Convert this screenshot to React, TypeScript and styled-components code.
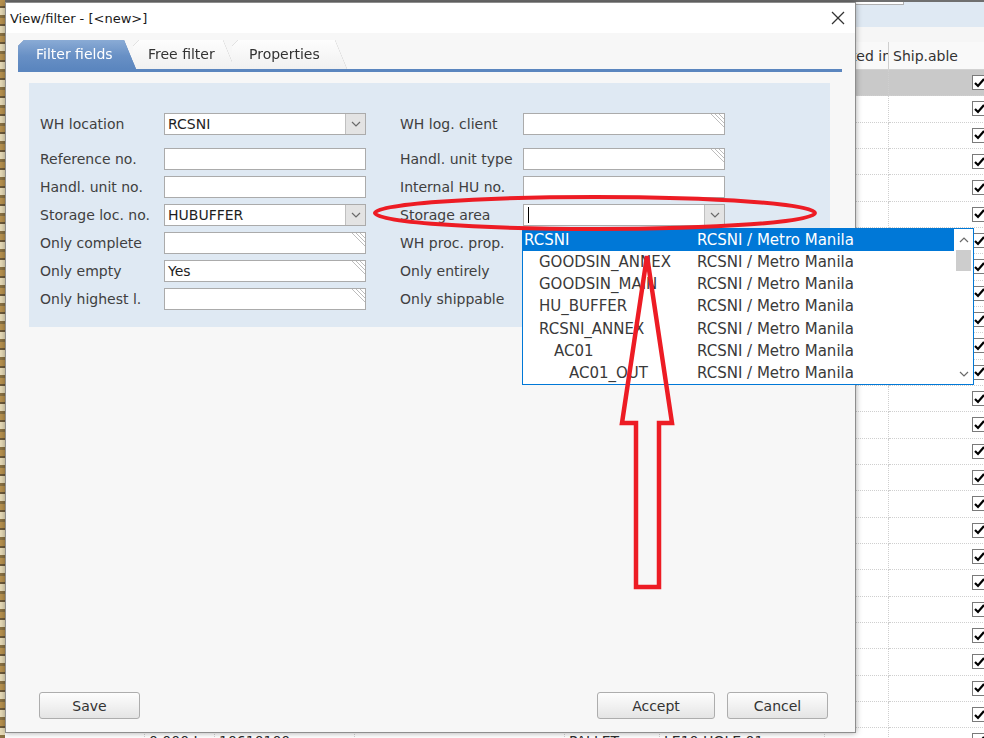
import styled, { createGlobalStyle } from 'styled-components';

const GlobalStyle = createGlobalStyle`
  html, body {
    margin: 0;
    padding: 0;
  }
  body {
    width: 984px;
    height: 738px;
    overflow: hidden;
    background: #ffffff;
    font-family: "DejaVu Sans", Verdana, sans-serif;
  }
  * {
    box-sizing: border-box;
  }
`;

const Screen = styled.div`
  position: relative;
  width: 984px;
  height: 738px;
  overflow: hidden;
  display: flex;
  background: #ffffff;
`;

/* ---------- background application ---------- */

const IconStrip = styled.div`
  width: 5px;
  flex: none;
  background: repeating-linear-gradient(
    180deg,
    #b8924f 0 6px,
    #6d5a3b 6px 8px,
    #e8dcb8 8px 15px,
    #8a7244 15px 18px
  );
`;

const Workspace = styled.div`
  flex: 1;
  min-width: 0;
  display: flex;
  flex-direction: column;
  overflow: hidden;
`;

const FilterBand = styled.div`
  height: 27px;
  flex: none;
  background: #dfe9f3;
  border-top: 2px solid #6f6f6f;
  display: flex;
  justify-content: flex-end;
  align-items: flex-start;
  padding-right: 80px;
`;

const BandInput = styled.div`
  width: 180px;
  height: 3px;
  background: #ffffff;
  border: 1px solid #b0b0b0;
  border-top: none;
`;

const BandGap = styled.div`
  height: 15px;
  flex: none;
  background: #f6f6f6;
`;

const gridCols = '140px 70px 140px 210px 95px 165px 64px 120px';

const HeaderRow = styled.div`
  display: grid;
  grid-template-columns: ${gridCols};
  height: 28px;
  flex: none;
  background: #f9f9f9;
  border-bottom: 1px solid #d2d2d2;
`;

const HeaderCell = styled.div`
  padding-left: 4px;
  display: flex;
  align-items: center;
  font-size: 14px;
  color: #333333;
  white-space: nowrap;
  overflow: hidden;
  border-right: 1px solid #cfcfcf;
`;

const TableRow = styled.div<{ $selected?: boolean }>`
  display: grid;
  grid-template-columns: ${gridCols};
  height: 26.33px;
  flex: none;
  background: ${(p) => (p.$selected ? '#c9c9c9' : '#ffffff')};
`;

const Cell = styled.div<{ $pad?: number }>`
  padding-left: ${(p) => p.$pad ?? 4}px;
  display: flex;
  align-items: center;
  font-size: 14px;
  color: #2b2b2b;
  white-space: nowrap;
  overflow: hidden;
  border-right: 1px dotted #cfcfcf;
  border-bottom: 1px dotted #cfcfcf;
`;

const CheckBox = styled.div`
  width: 15px;
  height: 15px;
  flex: none;
  background: #ffffff;
  border: 1px solid #7a7a7a;
  display: flex;
  align-items: center;
  justify-content: center;
`;

/* ---------- dialog ---------- */

const Dialog = styled.div`
  position: absolute;
  left: 5px;
  top: 2px;
  width: 851px;
  height: 731px;
  border: 1px solid #8e8e8e;
  background: #f7f7f7;
  box-shadow: 0 0 6px rgba(0, 0, 0, 0.35);
  display: flex;
  flex-direction: column;
  z-index: 2;
`;

const TitleBar = styled.div`
  height: 30px;
  flex: none;
  background: #ffffff;
  display: flex;
  align-items: center;
  justify-content: space-between;
  padding: 0 10px 0 4px;
`;

const Title = styled.div`
  font-size: 13px;
  color: #1a1a1a;
`;

const CloseButton = styled.div`
  width: 14px;
  height: 14px;
  display: flex;
`;

const DialogBody = styled.div`
  flex: 1;
  display: flex;
  flex-direction: column;
  padding: 7px 13px 13px 12px;
`;

const TabStrip = styled.div`
  height: 32px;
  flex: none;
  display: flex;
  align-items: flex-end;
  border-bottom: 3px solid #5b86bf;
`;

const TabFrame = styled.div<{ $active?: boolean; $first?: boolean }>`
  position: relative;
  z-index: ${(p) => (p.$active ? 2 : 1)};
  margin-left: ${(p) => (p.$first ? 0 : -3)}px;
  filter: drop-shadow(0 0 0.6px ${(p) => (p.$active ? '#4f79b1' : '#9a9a9a')});
`;

const TabFace = styled.div<{ $active?: boolean; $width: number; $pad: number }>`
  width: ${(p) => p.$width}px;
  height: 29px;
  padding-left: ${(p) => p.$pad}px;
  padding-bottom: 2px;
  display: flex;
  align-items: center;
  font-size: 14px;
  color: ${(p) => (p.$active ? '#ffffff' : '#333333')};
  background: ${(p) =>
    p.$active
      ? 'linear-gradient(180deg, #8aabd5 0%, #6890c5 55%, #5b86bf 100%)'
      : 'linear-gradient(180deg, #fdfdfd 0%, #f1f1f1 100%)'};
  clip-path: polygon(0 6px, 6px 0, calc(100% - 12px) 0, 100% 100%, 0 100%);
`;

const Panel = styled.div`
  height: 244px;
  flex: none;
  margin: 11px 12px 0 11px;
  background: #dfe9f3;
  padding: 30px 0 0 11px;
  display: flex;
  gap: 34px;
`;

const FieldColumn = styled.div`
  display: flex;
  flex-direction: column;
  gap: 6px;
`;

const FieldRow = styled.div<{ $labelWidth: number; $lead?: boolean }>`
  display: grid;
  grid-template-columns: ${(p) => p.$labelWidth}px 202px;
  height: 22px;
  align-items: center;
  margin-bottom: ${(p) => (p.$lead ? 7 : 0)}px;
`;

const Label = styled.div`
  font-size: 14px;
  color: #404040;
  white-space: nowrap;
`;

const InputBox = styled.div`
  height: 22px;
  background: #ffffff;
  border: 1px solid #ababab;
  display: flex;
  align-items: center;
  padding-left: 3px;
  font-size: 14px;
  color: #1e1e1e;
  overflow: hidden;
`;

const InputText = styled.span`
  flex: 1;
  white-space: nowrap;
`;

const DropButton = styled.div`
  width: 20px;
  height: 100%;
  flex: none;
  background: #e3e3e3;
  border-left: 1px solid #c0c0c0;
  display: flex;
  align-items: center;
  justify-content: center;
`;

const Hatch = styled.div`
  width: 14px;
  height: 14px;
  flex: none;
  align-self: flex-start;
  display: flex;
`;

const Caret = styled.span`
  width: 1px;
  height: 16px;
  background: #000000;
  margin-left: 1px;
`;

const ButtonBar = styled.div`
  margin-top: auto;
  display: flex;
  align-items: center;
  gap: 12px;
  padding: 0 14px 0 21px;
`;

const Spacer = styled.div`
  flex: 1;
`;

const PushButton = styled.div<{ $width: number }>`
  width: ${(p) => p.$width}px;
  height: 27px;
  border: 1px solid #adadad;
  border-radius: 3px;
  background: linear-gradient(180deg, #fdfdfd 0%, #f0f0f0 55%, #e4e4e4 100%);
  display: flex;
  align-items: center;
  justify-content: center;
  font-size: 14px;
  color: #333333;
`;

/* ---------- open dropdown list ---------- */

const DropList = styled.div`
  position: absolute;
  left: 522px;
  top: 228px;
  width: 452px;
  height: 157px;
  border: 1px solid #0078d7;
  background: #ffffff;
  display: flex;
  z-index: 5;
`;

const ListBody = styled.div`
  flex: 1;
  display: flex;
  flex-direction: column;
`;

const ListRow = styled.div<{ $selected?: boolean }>`
  display: grid;
  grid-template-columns: 174px 1fr;
  height: 22.3px;
  align-items: center;
  font-size: 15px;
  white-space: nowrap;
  color: ${(p) => (p.$selected ? '#ffffff' : '#3a3a3a')};
  background: ${(p) => (p.$selected ? '#0078d7' : 'transparent')};
`;

const ListName = styled.span<{ $indent: number }>`
  padding-left: ${(p) => 1 + p.$indent * 15}px;
`;

const ScrollBar = styled.div`
  width: 19px;
  flex: none;
  display: flex;
  flex-direction: column;
  background: #ffffff;
`;

const ScrollArrow = styled.div`
  height: 21px;
  flex: none;
  display: flex;
  align-items: center;
  justify-content: center;
`;

const ScrollThumb = styled.div`
  height: 21px;
  flex: none;
  margin: 0 2px;
  background: #cdcdcd;
`;

const Annotation = styled.svg`
  position: absolute;
  left: 0;
  top: 0;
  z-index: 10;
  pointer-events: none;
`;

/* ---------- data ---------- */

const leftFields = [
  { label: 'WH location', value: 'RCSNI', kind: 'combo' },
  { label: 'Reference no.', value: '', kind: 'text' },
  { label: 'Handl. unit no.', value: '', kind: 'text' },
  { label: 'Storage loc. no.', value: 'HUBUFFER', kind: 'combo' },
  { label: 'Only complete', value: '', kind: 'list' },
  { label: 'Only empty', value: 'Yes', kind: 'list' },
  { label: 'Only highest l.', value: '', kind: 'list' },
];

const rightFields = [
  { label: 'WH log. client', value: '', kind: 'list' },
  { label: 'Handl. unit type', value: '', kind: 'list' },
  { label: 'Internal HU no.', value: '', kind: 'text' },
  { label: 'Storage area', value: '', kind: 'caret' },
  { label: 'WH proc. prop.', value: '', kind: 'list' },
  { label: 'Only entirely', value: '', kind: 'list' },
  { label: 'Only shippable', value: '', kind: 'list' },
];

const areas = [
  { name: 'RCSNI', indent: 0 },
  { name: 'GOODSIN_ANNEX', indent: 1 },
  { name: 'GOODSIN_MAIN', indent: 1 },
  { name: 'HU_BUFFER', indent: 1 },
  { name: 'RCSNI_ANNEX', indent: 1 },
  { name: 'AC01', indent: 2 },
  { name: 'AC01_OUT', indent: 3 },
];

const headers = [
  'Storage bin',
  'Quantity',
  'Material',
  'Description',
  'Pack. type',
  'Stor. bin',
  'Picked in stock',
  'Ship.able',
];

const tableRows = Array.from({ length: 26 }, (_, i) => i);

function Chevron({ up }: { up?: boolean }) {
  return (
    <svg width="10" height="6" viewBox="0 0 10 6">
      <polyline
        points={up ? '1,5 5,1 9,5' : '1,1 5,5 9,1'}
        fill="none"
        stroke="#6a6a6a"
        strokeWidth="1.2"
      />
    </svg>
  );
}

function HatchCorner() {
  return (
    <Hatch>
      <svg width="14" height="14" viewBox="0 0 14 14">
        <line x1="1" y1="0" x2="14" y2="13" stroke="#bdbdbd" strokeWidth="1" />
        <line x1="5" y1="0" x2="14" y2="9" stroke="#bdbdbd" strokeWidth="1" />
        <line x1="9" y1="0" x2="14" y2="5" stroke="#bdbdbd" strokeWidth="1" />
      </svg>
    </Hatch>
  );
}

function Field({ label, value, kind, labelWidth, lead }: {
  label: string;
  value: string;
  kind: string;
  labelWidth: number;
  lead?: boolean;
}) {
  return (
    <FieldRow $labelWidth={labelWidth} $lead={lead}>
      <Label>{label}</Label>
      <InputBox>
        {kind === 'caret' && <Caret />}
        <InputText>{value}</InputText>
        {(kind === 'combo' || kind === 'caret') && (
          <DropButton>
            <Chevron />
          </DropButton>
        )}
        {kind === 'list' && <HatchCorner />}
      </InputBox>
    </FieldRow>
  );
}

export default function App() {
  return (
    <>
      <GlobalStyle />
      <Screen>
        <IconStrip />
        <Workspace>
          <FilterBand>
            <BandInput />
          </FilterBand>
          <BandGap />
          <HeaderRow>
            {headers.map((h) => (
              <HeaderCell key={h}>{h}</HeaderCell>
            ))}
          </HeaderRow>
          {tableRows.map((i) => (
            <TableRow key={i} $selected={i === 0}>
              <Cell />
              <Cell>0.000 L</Cell>
              <Cell>10610100</Cell>
              <Cell />
              <Cell>PALLET</Cell>
              <Cell>LE10 HOLE 01</Cell>
              <Cell />
              <Cell $pad={83}>
                <CheckBox>
                  <svg width="11" height="10" viewBox="0 0 11 10">
                    <polyline
                      points="1,5 4,8 10,1"
                      fill="none"
                      stroke="#000"
                      strokeWidth="2.2"
                    />
                  </svg>
                </CheckBox>
              </Cell>
            </TableRow>
          ))}
        </Workspace>

        <Dialog>
          <TitleBar>
            <Title>View/filter - [&lt;new&gt;]</Title>
            <CloseButton>
              <svg width="14" height="14" viewBox="0 0 14 14">
                <line x1="1" y1="1" x2="13" y2="13" stroke="#333" strokeWidth="1.3" />
                <line x1="13" y1="1" x2="1" y2="13" stroke="#333" strokeWidth="1.3" />
              </svg>
            </CloseButton>
          </TitleBar>
          <DialogBody>
            <TabStrip>
              <TabFrame $active $first>
                <TabFace $active $width={118} $pad={18}>Filter fields</TabFace>
              </TabFrame>
              <TabFrame>
                <TabFace $width={102} $pad={15}>Free filter</TabFace>
              </TabFrame>
              <TabFrame>
                <TabFace $width={115} $pad={17}>Properties</TabFace>
              </TabFrame>
            </TabStrip>

            <Panel>
              <FieldColumn>
                {leftFields.map((f, i) => (
                  <Field key={f.label} {...f} labelWidth={124} lead={i === 0} />
                ))}
              </FieldColumn>
              <FieldColumn>
                {rightFields.map((f, i) => (
                  <Field key={f.label} {...f} labelWidth={123} lead={i === 0} />
                ))}
              </FieldColumn>
            </Panel>

            <ButtonBar>
              <PushButton $width={101}>Save</PushButton>
              <Spacer />
              <PushButton $width={118}>Accept</PushButton>
              <PushButton $width={101}>Cancel</PushButton>
            </ButtonBar>
          </DialogBody>
        </Dialog>

        <DropList>
          <ListBody>
            {areas.map((a, i) => (
              <ListRow key={a.name} $selected={i === 0}>
                <ListName $indent={a.indent}>{a.name}</ListName>
                <span>RCSNI / Metro Manila</span>
              </ListRow>
            ))}
          </ListBody>
          <ScrollBar>
            <ScrollArrow>
              <Chevron up />
            </ScrollArrow>
            <ScrollThumb />
            <Spacer />
            <ScrollArrow>
              <Chevron />
            </ScrollArrow>
          </ScrollBar>
        </DropList>

        <Annotation width="984" height="738" viewBox="0 0 984 738">
          <ellipse
            cx="595"
            cy="213"
            rx="220"
            ry="16"
            fill="none"
            stroke="#ed1c24"
            strokeWidth="4"
          />
          <polygon
            points="647,256 672,423 659,423 659,587 636,587 636,423 622,423"
            fill="none"
            stroke="#ed1c24"
            strokeWidth="4.5"
            strokeLinejoin="miter"
          />
        </Annotation>
      </Screen>
    </>
  );
}
